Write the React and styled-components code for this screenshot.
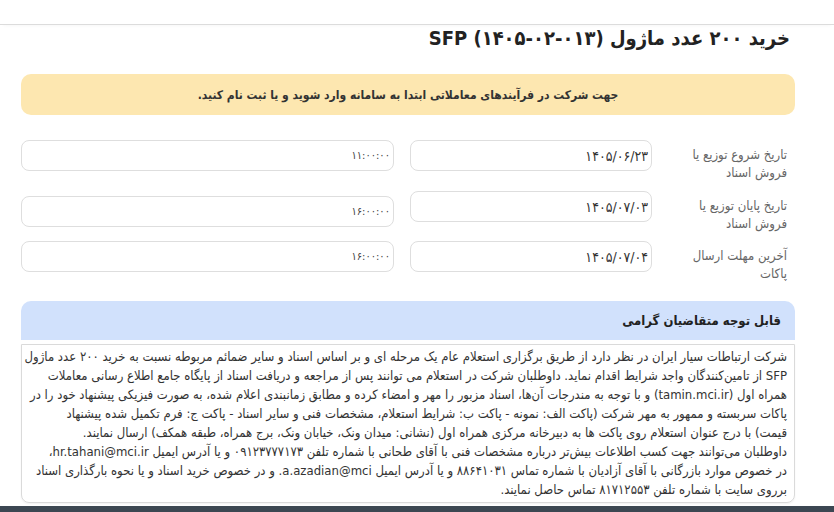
import React from "react";
import styled, { createGlobalStyle } from "styled-components";

const Global = createGlobalStyle`
  html, body { margin: 0; padding: 0; background: #fff; }
  body { font-family: "DejaVu Sans Condensed", "DejaVu Sans", sans-serif; color: #333; }
  * { box-sizing: border-box; }
`;

const Page = styled.div`
  direction: rtl;
  width: 834px;
  height: 512px;
  overflow: hidden;
  display: flex;
  flex-direction: column;
`;

const TopBar = styled.div`
  height: 25px;
  flex: none;
  border-bottom: 1px solid #dcdcdc;
  box-shadow: 0 4px 3px -3px rgba(0, 0, 0, 0.03);
`;

const Content = styled.main`
  padding: 0 39px 0 21px;
  display: flex;
  flex-direction: column;
`;

const Title = styled.h1`
  margin: 0;
  padding: 0 5px 0 0;
  font-size: 20px;
  line-height: 26px;
  font-weight: 700;
  color: #222;
`;

const Ltr = styled.bdi`
  direction: ltr;
  unicode-bidi: isolate;
`;

const Alert = styled.div`
  margin-top: 23px;
  height: 41px;
  border-radius: 10px;
  background: #fde7b0;
  display: flex;
  align-items: center;
  justify-content: center;
  font-size: 12px;
  font-weight: 700;
  color: #333;
`;

const Rows = styled.div`
  margin-top: 25px;
  display: flex;
  flex-direction: column;
  gap: 20px;
`;

const Row = styled.div`
  display: flex;
  align-items: flex-start;
  height: ${(p) => p.h}px;
`;

const Label = styled.div`
  width: 120px;
  flex: none;
  padding: 6px 8px 0 0;
  font-size: 13px;
  line-height: 18px;
  color: #666;
`;

const Field = styled.div`
  height: 31px;
  border: 1px solid #dedede;
  border-radius: 8px;
  background: #fff;
  display: flex;
  align-items: center;
  padding: 0 3px;
  flex: none;
`;

const DateField = styled(Field)`
  width: 242px;
  margin-right: 23px;
  font-size: 14px;
  color: #333;
`;

const TimeField = styled(Field)`
  width: 373px;
  margin-right: 16px;
  margin-top: ${(p) => p.shift || 0}px;
  font-size: 11px;
  color: #444;
`;

const NoticeHead = styled.div`
  margin-top: 18px;
  height: 39px;
  border-radius: 10px 10px 0 0;
  background: #d1e1fc;
  display: flex;
  align-items: center;
  padding-right: 14px;
  font-size: 13px;
  font-weight: 700;
  color: #222;
`;

const NoticeBody = styled.div`
  margin-top: 4px;
  height: 159px;
  border: 1px solid #dadada;
  border-radius: 0 0 8px 8px;
  padding: 2px 7px 0 4px;
  font-size: 13px;
  line-height: 19px;
  color: #333;
  box-shadow: 0 1px 2px rgba(0, 0, 0, 0.06);
`;

const Line = styled.div`
  white-space: nowrap;
`;

const Footer = styled.footer`
  margin-top: auto;
  height: 6px;
  flex: none;
  background: #3c4752;
`;

const rows = [
  { label: "تاریخ شروع توزیع یا فروش اسناد", date: "۱۴۰۵/۰۶/۲۳", time: "۱۱:۰۰:۰۰", h: 31, shift: 0 },
  { label: "تاریخ پایان توزیع یا فروش اسناد", date: "۱۴۰۵/۰۷/۰۳", time: "۱۶:۰۰:۰۰", h: 30, shift: 5 },
  { label: "آخرین مهلت ارسال پاکات", date: "۱۴۰۵/۰۷/۰۴", time: "۱۶:۰۰:۰۰", h: 42, shift: 0 },
];

const lines = [
  "شرکت ارتباطات سیار ایران در نظر دارد از طریق برگزاری استعلام عام یک مرحله ای و بر اساس اسناد و سایر ضمائم مربوطه نسبت به خرید ۲۰۰ عدد ماژول",
  "SFP از تامین‌کنندگان واجد شرایط اقدام نماید. داوطلبان شرکت در استعلام می توانند پس از مراجعه و دریافت اسناد از پایگاه جامع اطلاع رسانی معاملات",
  "همراه اول (tamin.mci.ir) و با توجه به مندرجات آن‌ها، اسناد مزبور را مهر و امضاء کرده و مطابق زمانبندی اعلام شده، به صورت فیزیکی پیشنهاد خود را در",
  "پاکات سربسته و ممهور به مهر شرکت (پاکت الف: نمونه - پاکت ب: شرایط استعلام، مشخصات فنی و سایر اسناد - پاکت ج: فرم تکمیل شده پیشنهاد",
  "قیمت) با درج عنوان استعلام روی پاکت ها به دبیرخانه مرکزی همراه اول (نشانی: میدان ونک، خیابان ونک، برج همراه، طبقه همکف) ارسال نمایند.",
  "داوطلبان می‌توانند جهت کسب اطلاعات بیش‌تر درباره مشخصات فنی با آقای طحانی با شماره تلفن ۰۹۱۲۳۷۷۷۱۷۳ و یا آدرس ایمیل hr.tahani@mci.ir،",
  "در خصوص موارد بازرگانی با آقای آزادیان با شماره تماس ۸۸۶۴۱۰۳۱ و یا آدرس ایمیل a.azadian@mci. و در خصوص خرید اسناد و یا نحوه بارگذاری اسناد",
  "برروی سایت با شماره تلفن ۸۱۷۱۲۵۵۳ تماس حاصل نمایند.",
];

export default function App() {
  return (
    <Page>
      <Global />
      <TopBar />
      <Content>
        <Title>
          خرید ۲۰۰ عدد ماژول <Ltr>SFP (۱۴۰۵-۰۲-۰۱۳)</Ltr>
        </Title>
        <Alert>جهت شرکت در فرآیندهای معاملاتی ابتدا به سامانه وارد شوید و یا ثبت نام کنید.</Alert>
        <Rows>
          {rows.map((r) => (
            <Row key={r.date} h={r.h}>
              <Label>{r.label}</Label>
              <DateField>{r.date}</DateField>
              <TimeField shift={r.shift}>{r.time}</TimeField>
            </Row>
          ))}
        </Rows>
        <NoticeHead>قابل توجه متقاضیان گرامی</NoticeHead>
        <NoticeBody>
          {lines.map((l, i) => (
            <Line key={i}>{l}</Line>
          ))}
        </NoticeBody>
      </Content>
      <Footer />
    </Page>
  );
}
